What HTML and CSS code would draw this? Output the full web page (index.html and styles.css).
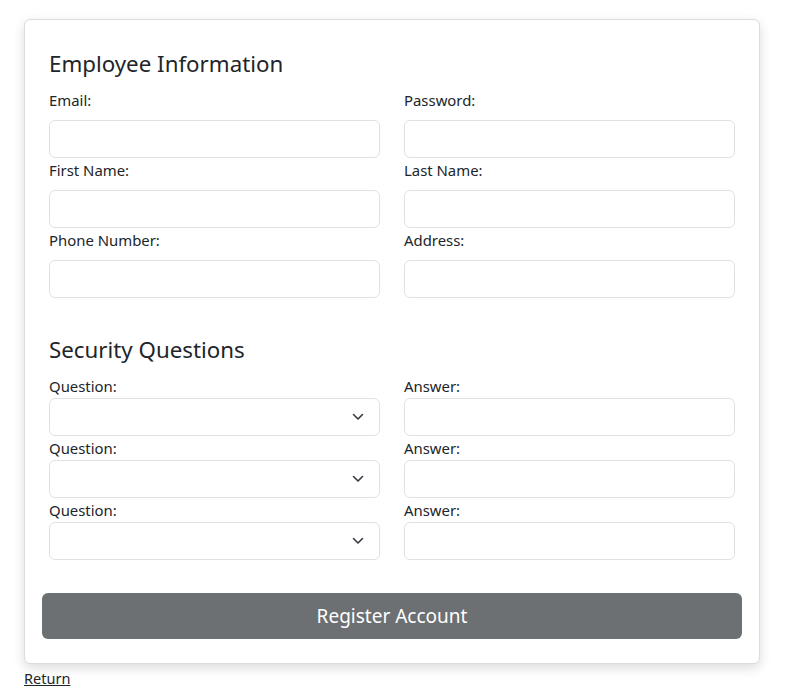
FILE: index.html
```html
<!DOCTYPE html>
<html lang="en">
<head>
<meta charset="utf-8">
<title>Register</title>
<link rel="stylesheet" href="styles.css">
</head>
<body>
<div class="page">
  <form class="card">
    <h4 class="section-title">Employee Information</h4>
    <div class="grid info">
      <div class="field"><label>Email:</label><input class="control" type="text"></div>
      <div class="field"><label>Password:</label><input class="control" type="password"></div>
      <div class="field"><label>First Name:</label><input class="control" type="text"></div>
      <div class="field"><label>Last Name:</label><input class="control" type="text"></div>
      <div class="field"><label>Phone Number:</label><input class="control" type="text"></div>
      <div class="field"><label>Address:</label><input class="control" type="text"></div>
    </div>
    <h4 class="section-title security">Security Questions</h4>
    <div class="grid questions">
      <div class="field"><label>Question:</label><div class="select"><span class="chev"><svg width="12" height="8" viewBox="0 0 12 8"><path d="M1.5 1.5 6 6l4.5-4.5" fill="none" stroke="#343a40" stroke-width="1.6" stroke-linecap="round" stroke-linejoin="round"/></svg></span></div></div>
      <div class="field"><label>Answer:</label><input class="control" type="text"></div>
      <div class="field"><label>Question:</label><div class="select"><span class="chev"><svg width="12" height="8" viewBox="0 0 12 8"><path d="M1.5 1.5 6 6l4.5-4.5" fill="none" stroke="#343a40" stroke-width="1.6" stroke-linecap="round" stroke-linejoin="round"/></svg></span></div></div>
      <div class="field"><label>Answer:</label><input class="control" type="text"></div>
      <div class="field"><label>Question:</label><div class="select"><span class="chev"><svg width="12" height="8" viewBox="0 0 12 8"><path d="M1.5 1.5 6 6l4.5-4.5" fill="none" stroke="#343a40" stroke-width="1.6" stroke-linecap="round" stroke-linejoin="round"/></svg></span></div></div>
      <div class="field"><label>Answer:</label><input class="control" type="text"></div>
    </div>
    <button type="button" class="submit">Register Account</button>
  </form>
  <a class="return" href="#">Return</a>
</div>
</body>
</html>
```
FILE: styles.css
```css
* { box-sizing: border-box; }
html, body { margin: 0; padding: 0; background: #fff; }
body {
  font-family: "Noto Sans", "Open Sans", sans-serif;
  color: #212529;
  font-size: 15px;
}
.page {
  padding: 19px 0 0 24px;
  width: 760px;
}
.card {
  display: block;
  border: 1px solid #dcdcdc;
  border-radius: 6px;
  box-shadow: 0 4px 12px rgba(0, 0, 0, 0.14);
  padding: 29px 24px 24px;
  background: #fff;
}
.section-title {
  margin: 0 0 9px;
  font-size: 22.3px;
  font-weight: 400;
  line-height: 30px;
}
.section-title.security { margin-top: 37px; }
.grid {
  display: grid;
  grid-template-columns: 331px 331px;
  column-gap: 24px;
}
.field label {
  display: block;
  line-height: 24px;
  font-size: 14.9px;
}
.info .field label { margin-bottom: 8px; }
.control, .select {
  display: block;
  width: 100%;
  height: 38px;
  border: 1px solid #dee2e6;
  border-radius: 6px;
  background: #fff;
  font: inherit;
  margin: 0;
}
.select {
  display: flex;
  align-items: center;
  justify-content: flex-end;
  padding-right: 15px;
}
.chev { display: flex; }
.submit {
  display: block;
  margin: 33px -7px 0;
  width: calc(100% + 14px);
  height: 46px;
  background: #6d7072;
  color: #fff;
  border: 0;
  border-radius: 6px;
  font-family: inherit;
  font-size: 19px;
}
.return {
  display: inline-block;
  margin-top: 2px;
  line-height: 24px;
  color: #212529;
  font-size: 14.5px;
  text-decoration: underline;
}
```
